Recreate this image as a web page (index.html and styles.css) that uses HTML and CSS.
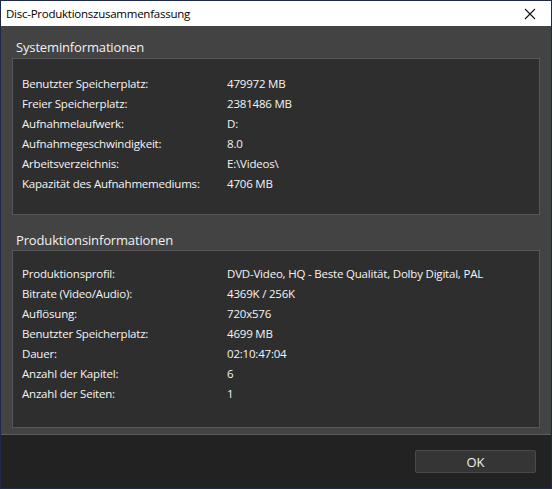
FILE: index.html
```html
<!DOCTYPE html>
<html>
<head>
<meta charset="utf-8">
<link rel="stylesheet" href="styles.css">
</head>
<body>
<div class="window">
  <div class="titlebar">
    <span class="title">Disc-Produktionszusammenfassung</span>
    <svg class="close" width="12" height="12" viewBox="0 0 12 12"><path d="M1 1L11 11M11 1L1 11" stroke="#111" stroke-width="1.1" fill="none"/></svg>
  </div>
  <div class="content">
    <div class="group g1">
      <div class="glabel">Systeminformationen</div>
      <div class="panel p1">
        <div class="row"><span class="k">Benutzter Speicherplatz:</span><span class="v">479972 MB</span></div>
        <div class="row"><span class="k">Freier Speicherplatz:</span><span class="v">2381486 MB</span></div>
        <div class="row"><span class="k">Aufnahmelaufwerk:</span><span class="v">D:</span></div>
        <div class="row"><span class="k">Aufnahmegeschwindigkeit:</span><span class="v">8.0</span></div>
        <div class="row"><span class="k">Arbeitsverzeichnis:</span><span class="v">E:\Videos\</span></div>
        <div class="row"><span class="k">Kapazität des Aufnahmemediums:</span><span class="v">4706 MB</span></div>
      </div>
    </div>
    <div class="group g2">
      <div class="glabel">Produktionsinformationen</div>
      <div class="panel p2">
        <div class="row"><span class="k">Produktionsprofil:</span><span class="v">DVD-Video, HQ - Beste Qualität, Dolby Digital, PAL</span></div>
        <div class="row"><span class="k">Bitrate (Video/Audio):</span><span class="v">4369K / 256K</span></div>
        <div class="row"><span class="k">Auflösung:</span><span class="v">720x576</span></div>
        <div class="row"><span class="k">Benutzter Speicherplatz:</span><span class="v">4699 MB</span></div>
        <div class="row"><span class="k">Dauer:</span><span class="v">02:10:47:04</span></div>
        <div class="row"><span class="k">Anzahl der Kapitel:</span><span class="v">6</span></div>
        <div class="row"><span class="k">Anzahl der Seiten:</span><span class="v">1</span></div>
      </div>
    </div>
  </div>
  <div class="footer">
    <button class="ok">OK</button>
  </div>
</div>
</body>
</html>
```
FILE: styles.css
```css
html, body {
  margin: 0;
  padding: 0;
  background: #1f2a44;
}
body {
  font-family: "Open Sans", "Noto Sans", sans-serif;
}
.window {
  width: 550px;
  height: 487px;
  border: 1px solid #1f2a44;
  display: flex;
  flex-direction: column;
  background: #434343;
}
.titlebar {
  height: 25px;
  background: #ffffff;
  display: flex;
  align-items: center;
  justify-content: space-between;
  padding: 0 15px 0 5px;
}
.title {
  font-size: 11.5px;
  color: #000;
  letter-spacing: -0.25px;
}
.close {
  display: block;
}
.content {
  height: 409px;
  padding: 0 11px 0 11px;
  border-bottom: 1px solid #5c5c5c;
  box-sizing: border-box;
}
.glabel {
  color: #f2f2f2;
  font-size: 13px;
  letter-spacing: -0.15px;
  padding-left: 4px;
  height: 20px;
  line-height: 20px;
}
.g1 { padding-top: 11px; }
.g2 { padding-top: 15px; }
.panel {
  background: #2e2e2e;
  border: 1px solid #575757;
  box-sizing: border-box;
  padding-left: 9px;
}
.p1 { height: 157px; padding-top: 15px; margin-top: 1px; }
.p2 { height: 178px; padding-top: 13px; margin-top: 0; }
.row {
  display: flex;
  height: 20px;
  line-height: 20px;
  font-size: 11.5px;
  color: #f5f5f5;
  letter-spacing: -0.2px;
}
.k { width: 205px; }
.footer {
  flex: 1;
  background: #222222;
  display: flex;
  justify-content: flex-end;
  align-items: flex-start;
  padding: 15px 15px 0 0;
}
.ok {
  width: 121px;
  height: 23px;
  background: #353535;
  border: 1px solid #4a4a4a;
  border-radius: 2px;
  color: #f0f0f0;
  font-family: "Open Sans", "Noto Sans", sans-serif;
  font-size: 13px;
  padding: 0;
}
```
